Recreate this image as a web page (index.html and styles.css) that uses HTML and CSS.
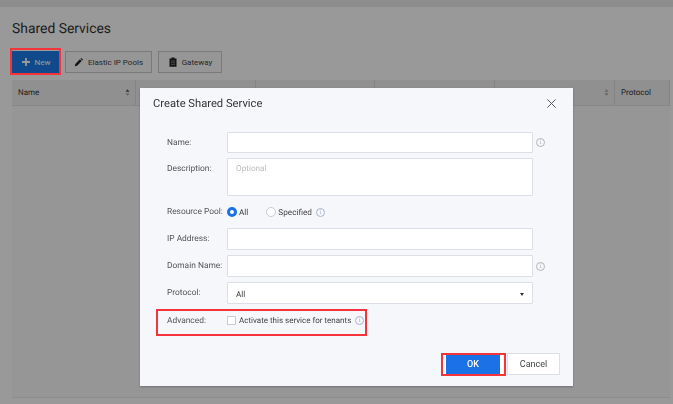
FILE: index.html
```html
<!DOCTYPE html>
<html lang="en">
<head>
    <meta charset="UTF-8">
    <meta name="viewport" content="width=device-width, initial-scale=1.0">
    <title>Shared Services</title>
    <link rel="stylesheet" href="styles.css">
</head>
<body>
    <div class="top-bar"></div>
    <div class="content">
        <h1 class="page-title">Shared Services</h1>
        <div class="toolbar">
            <button class="tool-btn tool-btn-primary">
                <svg class="tool-icon" viewBox="0 0 10 10"><path d="M5 1v8M1 5h8" stroke="#fff" stroke-width="1.8" fill="none"/></svg>
                New
            </button>
            <button class="tool-btn tool-btn-pools">
                <svg class="tool-icon" viewBox="0 0 10 10"><path d="M0.8 9.2l0.5-2.3 4.6-4.6 1.8 1.8-4.6 4.6zM6.5 1.7l0.8-0.8 1.8 1.8-0.8 0.8z" fill="#222"/></svg>
                Elastic IP Pools
            </button>
            <button class="tool-btn tool-btn-gateway">
                <svg class="tool-icon" viewBox="0 0 10 10"><path d="M1.5 1.5h2v-1h3v1h2v8.2h-7z" fill="#222"/><path d="M3 4h4M3 5.7h4M3 7.4h4" stroke="#999" stroke-width="0.7"/></svg>
                Gateway
            </button>
        </div>
        <div class="table-head">
            <div class="col">Name
                <svg class="sort" viewBox="0 0 6 8"><path d="M3 0l2.5 3h-5z" fill="#555"/><path d="M3 8l2.5-3h-5z" fill="#aaa"/></svg>
            </div>
            <div class="col"></div>
            <div class="col"></div>
            <div class="col"></div>
            <div class="col">
                <svg class="sort" viewBox="0 0 6 8"><path d="M3 0l2.5 3h-5z" fill="#aaa"/><path d="M3 8l2.5-3h-5z" fill="#aaa"/></svg>
            </div>
            <div class="col">Protocol</div>
        </div>
        <div class="table-body"></div>
    </div>

    <div class="overlay"></div>

    <div class="modal">
        <div class="modal-head">
            <span class="modal-title">Create Shared Service</span>
            <svg class="modal-close" viewBox="0 0 10 10"><path d="M0.5 0.5l9 9M9.5 0.5l-9 9" stroke="#555" stroke-width="1.1" fill="none"/></svg>
        </div>
        <div class="form">
            <label class="form-label">Name:</label>
            <div class="field"></div>
            <span class="info info-big">i</span>

            <label class="form-label form-label-top">Description:</label>
            <div class="field field-area">Optional</div>
            <span></span>

            <label class="form-label">Resource Pool:</label>
            <div class="radios">
                <span class="radio radio-on"></span><span class="radio-text">All</span>
                <span class="radio radio-second"></span><span class="radio-text">Specified</span>
                <span class="info">i</span>
            </div>
            <span></span>

            <label class="form-label">IP Address:</label>
            <div class="field"></div>
            <span></span>

            <label class="form-label">Domain Name:</label>
            <div class="field"></div>
            <span class="info info-big">i</span>

            <label class="form-label">Protocol:</label>
            <div class="field field-select">All<span class="caret"></span></div>
            <span></span>

            <label class="form-label form-label-adv">Advanced:</label>
            <div class="check-row">
                <span class="checkbox"></span>
                <span class="radio-text">Activate this service for tenants</span>
                <span class="info">i</span>
            </div>
            <span></span>
        </div>
        <div class="modal-foot">
            <button class="btn-ok">OK</button>
            <button class="btn-cancel">Cancel</button>
        </div>
    </div>

    <div class="mark mark-new"></div>
    <div class="mark mark-adv"></div>
    <div class="mark mark-ok"></div>
</body>
</html>
```

FILE: styles.css
```css
body {
    margin: 0;
    height: 404px;
    overflow: hidden;
    font-family: Roboto, "Liberation Sans", sans-serif;
    text-rendering: geometricPrecision;
    background-color: #ffffff;
    color: #333;
}

.top-bar {
    height: 7px;
    background-color: #ebebeb;
}

.content {
    padding: 0 3px 0 12px;
}

.page-title {
    margin: 0;
    padding-top: 13px;
    height: 31px;
    font-size: 13.9px;
    line-height: 18px;
    font-weight: 400;
    color: #333;
}

.toolbar {
    display: flex;
    gap: 6px;
}

.tool-btn {
    display: flex;
    align-items: center;
    justify-content: center;
    gap: 4px;
    height: 22px;
    padding: 0;
    font-family: inherit;
    font-size: 8px;
    color: #444;
    background-color: #fafafa;
    border: 1px solid #ccc;
}

.tool-btn-primary {
    width: 47px;
    color: #fff;
    background-color: #1b7bea;
    border-color: #1b7bea;
}

.tool-btn-pools {
    width: 87px;
}

.tool-btn-gateway {
    width: 64px;
}

.tool-icon {
    width: 10px;
    height: 10px;
}

.table-head {
    display: grid;
    grid-template-columns: 124px 120px 119px 120px 120px 1fr;
    height: 25px;
    margin-top: 7px;
    background-color: #f0f0f0;
    border-bottom: 1px solid #e2e2e2;
}

.col {
    display: flex;
    align-items: center;
    justify-content: space-between;
    padding: 0 5px 0 6px;
    font-size: 8px;
    color: #333;
    border-right: 1px solid #dcdcdc;
}

.sort {
    width: 5px;
    height: 7px;
    margin-left: auto;
}

.table-body {
    height: 291px;
    background-color: #fafafa;
    border-bottom: 1px solid #ececec;
}

.overlay {
    position: fixed;
    inset: 0;
    background-color: rgba(0, 0, 0, 0.4);
}

.modal {
    position: absolute;
    left: 140px;
    top: 88px;
    width: 433px;
    height: 298px;
    background-color: #f6f7fa;
    box-shadow: 0 1px 2px rgba(0, 0, 0, 0.25);
}

.modal-head {
    display: flex;
    align-items: center;
    justify-content: space-between;
    height: 30px;
    padding: 0 17px 0 13px;
}

.modal-title {
    font-size: 11.2px;
    color: #333;
}

.modal-close {
    width: 9px;
    height: 9px;
    margin-top: 1px;
}

.form {
    display: grid;
    grid-template-columns: 60px 306px 19px;
    grid-template-rows: 21px 38px 22px 22px 22px 22px 27px;
    row-gap: 5px;
    margin-top: 14px;
    padding-left: 27px;
    align-items: center;
}

.form-label {
    font-size: 8.4px;
    color: #555;
    white-space: nowrap;
}

.form-label-top {
    align-self: start;
    padding-top: 6px;
}

.form-label-adv {
    align-self: start;
    padding-top: 7px;
}

.field {
    box-sizing: border-box;
    height: 100%;
    background-color: #fff;
    border: 1px solid #dcdfe5;
    border-radius: 1px;
}

.field-area {
    padding: 5px 8px;
    font-size: 8.2px;
    line-height: 11px;
    color: #bbb;
}

.field-select {
    display: flex;
    align-items: center;
    justify-content: space-between;
    padding: 3px 8px 0;
    font-size: 8.2px;
    color: #444;
}

.caret {
    width: 0;
    height: 0;
    border-left: 2.5px solid transparent;
    border-right: 2.5px solid transparent;
    border-top: 3px solid #333;
}

.info {
    display: inline-block;
    box-sizing: border-box;
    width: 9px;
    height: 9px;
    font-size: 7px;
    line-height: 7px;
    text-align: center;
    color: #a9b5c9;
    border: 1px solid #a9b5c9;
    border-radius: 50%;
    font-family: "Liberation Serif", serif;
}

.info-big {
    margin-left: 3px;
    color: #b4b4b4;
    border-color: #b4b4b4;
}

.radios,
.check-row {
    display: flex;
    align-items: center;
    color: #444;
}

.radios {
    font-size: 8.2px;
}

.radios .radio-text {
    padding-top: 1px;
}

.check-row {
    align-self: start;
    padding-top: 7px;
    font-size: 8px;
}

.radio {
    box-sizing: border-box;
    width: 10px;
    height: 10px;
    margin-right: 2px;
    background-color: #fff;
    border: 1px solid #c8ccd4;
    border-radius: 50%;
}

.radio-on {
    border: 3px solid #1b72e6;
}

.radio-second {
    margin-left: 18px;
}

.radio-text + .info {
    margin-left: 4px;
}

.checkbox {
    box-sizing: border-box;
    width: 9px;
    height: 9px;
    margin-right: 3px;
    background-color: #fff;
    border: 1px solid #c8ccd4;
}

.modal-foot {
    display: flex;
    justify-content: flex-end;
    gap: 4px;
    padding: 17px 13px 0 0;
}

.btn-ok,
.btn-cancel {
    height: 22px;
    padding: 0;
    font-family: inherit;
    font-size: 9px;
}

.btn-ok {
    width: 60px;
    font-weight: 500;
    color: #fff;
    background-color: #1b72e6;
    border: solid #fff;
    border-width: 0 3px;
}

.btn-cancel {
    width: 53px;
    color: #444;
    background-color: #fff;
    border: 1px solid #dcdfe5;
}

.mark {
    position: absolute;
    box-sizing: border-box;
    border: 2px solid #f5333a;
}

.mark-new {
    left: 10px;
    top: 48px;
    width: 51px;
    height: 27px;
}

.mark-adv {
    left: 156px;
    top: 309px;
    width: 211px;
    height: 27px;
}

.mark-ok {
    left: 441px;
    top: 353px;
    width: 65px;
    height: 23px;
}
```
